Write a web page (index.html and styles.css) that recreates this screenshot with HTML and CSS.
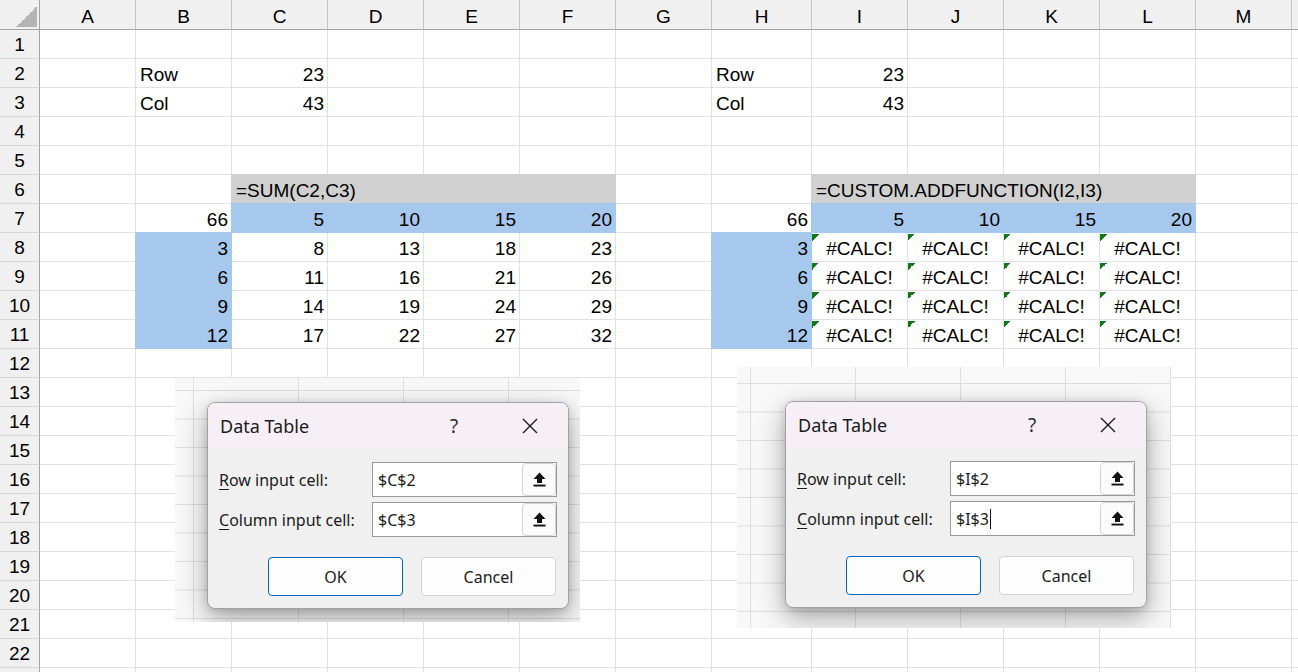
FILE: index.html
```html
<!DOCTYPE html>
<html lang="en">
<head>
<meta charset="utf-8">
<title>Data Table</title>
<link rel="stylesheet" href="styles.css">
</head>
<body>
<div class="sheet">
  <div class="row hdr">
    <div class="ch corner"></div><div class="ch">A</div><div class="ch">B</div><div class="ch">C</div><div class="ch">D</div><div class="ch">E</div><div class="ch">F</div><div class="ch">G</div><div class="ch">H</div><div class="ch">I</div><div class="ch">J</div><div class="ch">K</div><div class="ch">L</div><div class="ch">M</div><div class="ch"></div>
  </div>
  <div class="row"><div class="rh">1</div><div class="c"></div><div class="c"></div><div class="c"></div><div class="c"></div><div class="c"></div><div class="c"></div><div class="c"></div><div class="c"></div><div class="c"></div><div class="c"></div><div class="c"></div><div class="c"></div><div class="c"></div><div class="c"></div></div>
  <div class="row"><div class="rh">2</div><div class="c"></div><div class="c">Row</div><div class="c r">23</div><div class="c"></div><div class="c"></div><div class="c"></div><div class="c"></div><div class="c">Row</div><div class="c r">23</div><div class="c"></div><div class="c"></div><div class="c"></div><div class="c"></div><div class="c"></div></div>
  <div class="row"><div class="rh">3</div><div class="c"></div><div class="c">Col</div><div class="c r">43</div><div class="c"></div><div class="c"></div><div class="c"></div><div class="c"></div><div class="c">Col</div><div class="c r">43</div><div class="c"></div><div class="c"></div><div class="c"></div><div class="c"></div><div class="c"></div></div>
  <div class="row"><div class="rh">4</div><div class="c"></div><div class="c"></div><div class="c"></div><div class="c"></div><div class="c"></div><div class="c"></div><div class="c"></div><div class="c"></div><div class="c"></div><div class="c"></div><div class="c"></div><div class="c"></div><div class="c"></div><div class="c"></div></div>
  <div class="row"><div class="rh">5</div><div class="c"></div><div class="c"></div><div class="c"></div><div class="c"></div><div class="c"></div><div class="c"></div><div class="c"></div><div class="c"></div><div class="c"></div><div class="c"></div><div class="c"></div><div class="c"></div><div class="c"></div><div class="c"></div></div>
  <div class="row"><div class="rh">6</div><div class="c"></div><div class="c"></div><div class="c gray span4">=SUM(C2,C3)</div><div class="c"></div><div class="c"></div><div class="c gray span4">=CUSTOM.ADDFUNCTION(I2,I3)</div><div class="c"></div><div class="c"></div></div>
  <div class="row"><div class="rh">7</div><div class="c"></div><div class="c r">66</div><div class="c r blue">5</div><div class="c r blue">10</div><div class="c r blue">15</div><div class="c r blue">20</div><div class="c"></div><div class="c r">66</div><div class="c r blue">5</div><div class="c r blue">10</div><div class="c r blue">15</div><div class="c r blue">20</div><div class="c"></div><div class="c"></div></div>
  <div class="row"><div class="rh">8</div><div class="c"></div><div class="c r blue">3</div><div class="c r">8</div><div class="c r">13</div><div class="c r">18</div><div class="c r">23</div><div class="c"></div><div class="c r blue">3</div><div class="c err">#CALC!</div><div class="c err">#CALC!</div><div class="c err">#CALC!</div><div class="c err">#CALC!</div><div class="c"></div><div class="c"></div></div>
  <div class="row"><div class="rh">9</div><div class="c"></div><div class="c r blue">6</div><div class="c r">11</div><div class="c r">16</div><div class="c r">21</div><div class="c r">26</div><div class="c"></div><div class="c r blue">6</div><div class="c err">#CALC!</div><div class="c err">#CALC!</div><div class="c err">#CALC!</div><div class="c err">#CALC!</div><div class="c"></div><div class="c"></div></div>
  <div class="row"><div class="rh">10</div><div class="c"></div><div class="c r blue">9</div><div class="c r">14</div><div class="c r">19</div><div class="c r">24</div><div class="c r">29</div><div class="c"></div><div class="c r blue">9</div><div class="c err">#CALC!</div><div class="c err">#CALC!</div><div class="c err">#CALC!</div><div class="c err">#CALC!</div><div class="c"></div><div class="c"></div></div>
  <div class="row"><div class="rh">11</div><div class="c"></div><div class="c r blue">12</div><div class="c r">17</div><div class="c r">22</div><div class="c r">27</div><div class="c r">32</div><div class="c"></div><div class="c r blue">12</div><div class="c err">#CALC!</div><div class="c err">#CALC!</div><div class="c err">#CALC!</div><div class="c err">#CALC!</div><div class="c"></div><div class="c"></div></div>
  <div class="row"><div class="rh">12</div><div class="c"></div><div class="c"></div><div class="c"></div><div class="c"></div><div class="c"></div><div class="c"></div><div class="c"></div><div class="c"></div><div class="c"></div><div class="c"></div><div class="c"></div><div class="c"></div><div class="c"></div><div class="c"></div></div>
  <div class="row"><div class="rh">13</div><div class="c"></div><div class="c"></div><div class="c"></div><div class="c"></div><div class="c"></div><div class="c"></div><div class="c"></div><div class="c"></div><div class="c"></div><div class="c"></div><div class="c"></div><div class="c"></div><div class="c"></div><div class="c"></div></div>
  <div class="row"><div class="rh">14</div><div class="c"></div><div class="c"></div><div class="c"></div><div class="c"></div><div class="c"></div><div class="c"></div><div class="c"></div><div class="c"></div><div class="c"></div><div class="c"></div><div class="c"></div><div class="c"></div><div class="c"></div><div class="c"></div></div>
  <div class="row"><div class="rh">15</div><div class="c"></div><div class="c"></div><div class="c"></div><div class="c"></div><div class="c"></div><div class="c"></div><div class="c"></div><div class="c"></div><div class="c"></div><div class="c"></div><div class="c"></div><div class="c"></div><div class="c"></div><div class="c"></div></div>
  <div class="row"><div class="rh">16</div><div class="c"></div><div class="c"></div><div class="c"></div><div class="c"></div><div class="c"></div><div class="c"></div><div class="c"></div><div class="c"></div><div class="c"></div><div class="c"></div><div class="c"></div><div class="c"></div><div class="c"></div><div class="c"></div></div>
  <div class="row"><div class="rh">17</div><div class="c"></div><div class="c"></div><div class="c"></div><div class="c"></div><div class="c"></div><div class="c"></div><div class="c"></div><div class="c"></div><div class="c"></div><div class="c"></div><div class="c"></div><div class="c"></div><div class="c"></div><div class="c"></div></div>
  <div class="row"><div class="rh">18</div><div class="c"></div><div class="c"></div><div class="c"></div><div class="c"></div><div class="c"></div><div class="c"></div><div class="c"></div><div class="c"></div><div class="c"></div><div class="c"></div><div class="c"></div><div class="c"></div><div class="c"></div><div class="c"></div></div>
  <div class="row"><div class="rh">19</div><div class="c"></div><div class="c"></div><div class="c"></div><div class="c"></div><div class="c"></div><div class="c"></div><div class="c"></div><div class="c"></div><div class="c"></div><div class="c"></div><div class="c"></div><div class="c"></div><div class="c"></div><div class="c"></div></div>
  <div class="row"><div class="rh">20</div><div class="c"></div><div class="c"></div><div class="c"></div><div class="c"></div><div class="c"></div><div class="c"></div><div class="c"></div><div class="c"></div><div class="c"></div><div class="c"></div><div class="c"></div><div class="c"></div><div class="c"></div><div class="c"></div></div>
  <div class="row"><div class="rh">21</div><div class="c"></div><div class="c"></div><div class="c"></div><div class="c"></div><div class="c"></div><div class="c"></div><div class="c"></div><div class="c"></div><div class="c"></div><div class="c"></div><div class="c"></div><div class="c"></div><div class="c"></div><div class="c"></div></div>
  <div class="row"><div class="rh">22</div><div class="c"></div><div class="c"></div><div class="c"></div><div class="c"></div><div class="c"></div><div class="c"></div><div class="c"></div><div class="c"></div><div class="c"></div><div class="c"></div><div class="c"></div><div class="c"></div><div class="c"></div><div class="c"></div></div>
  <div class="row"><div class="rh"></div><div class="c"></div><div class="c"></div><div class="c"></div><div class="c"></div><div class="c"></div><div class="c"></div><div class="c"></div><div class="c"></div><div class="c"></div><div class="c"></div><div class="c"></div><div class="c"></div><div class="c"></div><div class="c"></div></div>

  <div class="shot shot1">
    <div class="dlg">
      <div class="title">
        <span class="t-text">Data Table</span>
        <span class="help">?</span>
        <svg class="close" width="16" height="16" viewBox="0 0 16 16"><path d="M1 1 L15 15 M15 1 L1 15" stroke="#1b1b1b" stroke-width="1.4" fill="none"/></svg>
      </div>
      <div class="body">
        <div class="field">
          <span class="label"><u>R</u>ow input cell:</span>
          <div class="input"><span class="val">$C$2</span><span class="pick"><svg width="13" height="15" viewBox="0 0 13 15"><path d="M6.5 0.5 L12.5 7 H9 V11 H4 V7 H0.5 Z" fill="#111"/><rect x="0.5" y="12.6" width="12" height="1.9" fill="#111"/></svg></span></div>
        </div>
        <div class="field">
          <span class="label"><u>C</u>olumn input cell:</span>
          <div class="input"><span class="val">$C$3</span><span class="pick"><svg width="13" height="15" viewBox="0 0 13 15"><path d="M6.5 0.5 L12.5 7 H9 V11 H4 V7 H0.5 Z" fill="#111"/><rect x="0.5" y="12.6" width="12" height="1.9" fill="#111"/></svg></span></div>
        </div>
      </div>
      <div class="buttons">
        <div class="btn ok">OK</div>
        <div class="btn">Cancel</div>
      </div>
    </div>
  </div>

  <div class="shot shot2">
    <div class="dlg">
      <div class="title">
        <span class="t-text">Data Table</span>
        <span class="help">?</span>
        <svg class="close" width="16" height="16" viewBox="0 0 16 16"><path d="M1 1 L15 15 M15 1 L1 15" stroke="#1b1b1b" stroke-width="1.4" fill="none"/></svg>
      </div>
      <div class="body">
        <div class="field">
          <span class="label"><u>R</u>ow input cell:</span>
          <div class="input"><span class="val">$I$2</span><span class="pick"><svg width="13" height="15" viewBox="0 0 13 15"><path d="M6.5 0.5 L12.5 7 H9 V11 H4 V7 H0.5 Z" fill="#111"/><rect x="0.5" y="12.6" width="12" height="1.9" fill="#111"/></svg></span></div>
        </div>
        <div class="field">
          <span class="label"><u>C</u>olumn input cell:</span>
          <div class="input"><span class="val">$I$3</span><span class="caret"></span><span class="pick"><svg width="13" height="15" viewBox="0 0 13 15"><path d="M6.5 0.5 L12.5 7 H9 V11 H4 V7 H0.5 Z" fill="#111"/><rect x="0.5" y="12.6" width="12" height="1.9" fill="#111"/></svg></span></div>
        </div>
      </div>
      <div class="buttons">
        <div class="btn ok">OK</div>
        <div class="btn">Cancel</div>
      </div>
    </div>
  </div>
</div>
</body>
</html>
```
FILE: styles.css
```css
* { box-sizing: border-box; }
html, body { margin: 0; padding: 0; background: #fff; overflow: hidden; }
body {
  width: 1298px;
  height: 672px;
  font-family: "Liberation Sans", Arial, sans-serif;
  color: #000;
}
.sheet { position: relative; width: 1298px; height: 672px; overflow: hidden; }

.row {
  display: grid;
  grid-template-columns: 40px repeat(7, 96px) 100px repeat(6, 96px);
  height: 29px;
}
.hdr { height: 30px; }

.ch {
  height: 30px;
  background: #f0f0f0;
  border-right: 1px solid #c6c6c6;
  border-bottom: 1px solid #a3a3a3;
  text-align: center;
  font-size: 19px;
  line-height: 22px;
  padding-top: 6px;
}
.corner {
  border-right-color: #a3a3a3;
  background: linear-gradient(315deg, #b4b4b4 50%, transparent 50%) no-repeat right 2px bottom 2px / 21px 21px, #f0f0f0;
}

.rh {
  height: 29px;
  background: #f0f0f0;
  border-right: 1px solid #a3a3a3;
  border-bottom: 1px solid #d8d8d8;
  text-align: center;
  font-size: 19px;
  line-height: 22px;
  padding-top: 4px;
}

.c {
  height: 29px;
  background: #fff;
  border-right: 1px solid #e1e1e1;
  border-bottom: 1px solid #e1e1e1;
  font-size: 19px;
  line-height: 22px;
  padding: 5px 3px 0 4px;
  white-space: nowrap;
}
.r { text-align: right; }
.span4 { grid-column: span 4; }

.blue {
  background: #a6c8ec;
  border-color: #a6c8ec;
  box-shadow: 0 0 0 1px #a6c8ec;
}
.gray {
  background: #d0d0d0;
  border-color: #d0d0d0;
  box-shadow: 0 0 0 1px #d0d0d0;
}
.err {
  text-align: center;
  padding-left: 3px;
  padding-right: 3px;
  background: linear-gradient(135deg, #0d7d12 50%, transparent 50%) no-repeat 0 1px / 7px 7px, #fff;
}

/* pasted dialog screenshots */
.shot {
  position: absolute;
  overflow: hidden;
  background-color: #f8f8f8;
  background-image:
    linear-gradient(to right, #dedede 1px, transparent 1px),
    linear-gradient(to bottom, #dedede 1px, transparent 1px);
  background-size: 105px 28.5px;
}
.shot1 {
  left: 175px;
  top: 378px;
  width: 405px;
  height: 244px;
  padding: 24px 0 0 32px;
  background-position: 18px 12px;
}
.shot2 {
  left: 737px;
  top: 367px;
  width: 434px;
  height: 261px;
  padding: 34px 0 0 48px;
  background-position: 13px 16px;
}

.dlg {
  width: 362px;
  height: 207px;
  border: 1px solid #a2a2a2;
  border-radius: 8px;
  background: #f0f0f0;
  box-shadow: 0 10px 28px rgba(0, 0, 0, 0.32), 0 2px 8px rgba(0, 0, 0, 0.14);
  overflow: hidden;
  font-family: "Noto Sans", "Open Sans", sans-serif;
  color: #1b1b1b;
  display: flex;
  flex-direction: column;
}
.title {
  height: 46px;
  flex: none;
  background: #f6eff6;
  display: flex;
  align-items: center;
  padding-left: 12px;
  font-size: 18px;
}
.t-text { flex: 1; }
.help {
  width: 20px;
  text-align: center;
  font-size: 19px;
  margin-right: 58px;
  color: #2a2a2a;
}
.close { margin-right: 30px; flex: none; }

.body {
  padding: 13px 11px 0 11px;
  display: flex;
  flex-direction: column;
  gap: 5px;
}
.field { display: flex; align-items: center; height: 35px; }
.label { flex: 1; font-size: 16px; }
.label u { text-underline-offset: 3px; }
.input {
  width: 185px;
  height: 35px;
  border: 1px solid #9a9a9a;
  background: #fff;
  display: flex;
  align-items: center;
  padding-left: 5px;
  font-size: 16px;
}
.val { line-height: 20px; }
.caret { width: 1px; height: 20px; background: #111; margin-left: 1px; }
.pick {
  margin-left: auto;
  width: 34px;
  height: 33px;
  border: 1px solid #d4d4d4;
  border-radius: 4px;
  background: #fbfbfb;
  display: flex;
  align-items: center;
  justify-content: center;
}

.buttons {
  margin-top: 20px;
  padding-right: 12px;
  display: flex;
  justify-content: flex-end;
  gap: 18px;
}
.btn {
  width: 135px;
  height: 39px;
  border: 1px solid #d3d3d3;
  border-radius: 4px;
  background: #fdfdfd;
  font-size: 16px;
  display: flex;
  align-items: center;
  justify-content: center;
}
.ok { border-color: #0067c0; }
```
